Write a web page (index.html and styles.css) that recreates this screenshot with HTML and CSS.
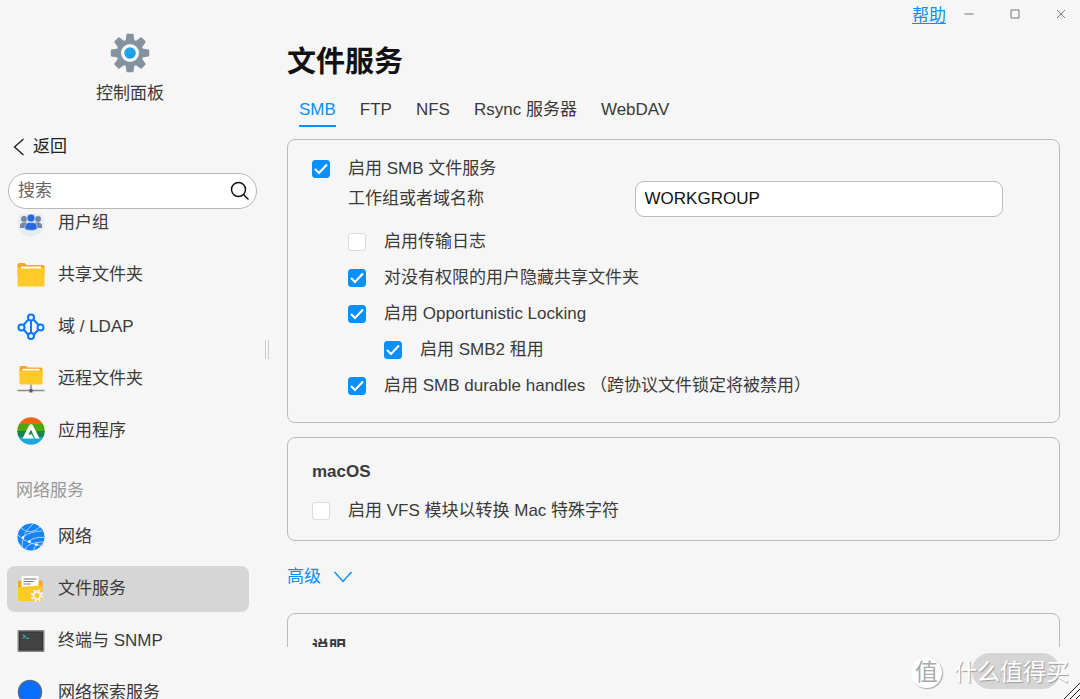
FILE: index.html
```html
<!DOCTYPE html>
<html lang="zh-CN">
<head>
<meta charset="utf-8">
<title>控制面板</title>
<link rel="stylesheet" href="styles.css">
</head>
<body>
<div class="window">
  <aside class="sidebar">
    <div class="app">
      <svg class="app-icon" viewBox="0 0 40 40" aria-hidden="true">
        <defs><linearGradient id="dot" x1="0" y1="0" x2="1" y2="1"><stop offset="0" stop-color="#2bb0ee"/><stop offset="1" stop-color="#1590e0"/></linearGradient></defs>
        <g fill="#84929f">
          <circle cx="20" cy="20" r="13.500"/>
          <g id="teeth"><path id="tooth" d="M15.500 8 16.500 1.600Q16.600.8 17.400.8h5.200q.8 0 .9.800L24.500 8z"/><use href="#tooth" transform="rotate(90 20 20)"/><use href="#tooth" transform="rotate(180 20 20)"/><use href="#tooth" transform="rotate(270 20 20)"/></g>
          <use href="#teeth" transform="rotate(45 20 20)"/>
        </g>
        <circle cx="20" cy="20" r="9" fill="#fafafa"/><circle cx="20" cy="20" r="5.800" fill="url(#dot)"/>
      </svg>
      <span>控制面板</span>
    </div>
    <button class="back" type="button">
      <svg width="12" height="18" viewBox="0 0 12 18" fill="none" stroke="#222" stroke-width="1.400" aria-hidden="true"><path d="M10.500 1 1.500 9l9 8"/></svg>返回
    </button>
    <label class="search">
      <input type="text" placeholder="搜索" aria-label="搜索">
      <svg width="20" height="20" viewBox="0 0 20 20" fill="none" stroke="#111" stroke-width="1.500" aria-hidden="true"><circle cx="8.500" cy="8.500" r="7"/><path d="m13.500 13.500 5 5"/></svg>
    </label>
    <nav class="nav">
      <ul class="nav-list">
        <li><a class="item" href="#group">
          <svg class="icon" viewBox="0 0 28 28"><circle cx="14" cy="14" r="13.500" fill="#e5ecf3"/><g fill="#73879f"><circle cx="7" cy="10" r="3"/><circle cx="21" cy="10" r="3"/><path d="M3 19v-2q0-3.500 4-3.500h3V19zM25 19v-2q0-3.500-4-3.500h-3V19z"/></g><path d="M8 20.500v-3q0-4 4-4h4q4 0 4 4v3q-6 2-12 0z" fill="#2868df" stroke="#e5ecf3" stroke-width=".6"/><circle cx="14" cy="9" r="4" fill="#2868df" stroke="#e5ecf3" stroke-width=".6"/></svg>
          用户组</a></li>
        <li><a class="item" href="#share">
          <svg class="icon" viewBox="0 0 28 28"><path d="M.5 4q0-2 2-2h5l2 2H26q1.500 0 1.500 1.500v8H.5z" fill="#f9a526"/><path d="M.5 7h27v17q0 1.500-1.500 1.500H2Q.5 25.500.5 24z" fill="#ffca28"/><path d="M4 5.500h20v2H4z" fill="#fff"/></svg>
          共享文件夹</a></li>
        <li><a class="item" href="#ldap">
          <svg class="icon" viewBox="0 0 28 28" fill="none" stroke="#0878ff" stroke-width="2"><path d="M14 7v14M11.500 6.500 6.500 12M16.500 6.500l5 5.500M7 17l4.500 5M21 17l-4.500 5"/><circle cx="14" cy="4.500" r="3"/><circle cx="4.500" cy="14.500" r="3"/><circle cx="23.500" cy="14.500" r="3"/><circle cx="14" cy="23" r="3"/></svg>
          域 / LDAP</a></li>
        <li><a class="item" href="#remote">
          <svg class="icon" viewBox="0 0 28 28"><path d="M2.500 2.500q0-1.500 1.500-1.500h5l2 1.500h13q1.500 0 1.500 1.500v8h-23z" fill="#f9a526"/><path d="M2.500 5.500h23V18q0 1.500-1.500 1.500H4q-1.500 0-1.500-1.500z" fill="#ffca28"/><path d="M5.500 3.800h17v1.700h-17z" fill="#fff"/><path d="M14 19.500V25M.5 25.500h27" stroke="#8a8d90" stroke-width="1.500"/><path d="M12.500 24h3v3.500h-3z" fill="#55595d"/></svg>
          远程文件夹</a></li>
        <li><a class="item" href="#apps">
          <svg class="icon" viewBox="0 0 28 28"><clipPath id="disc"><circle cx="14" cy="14" r="13.700"/></clipPath><g clip-path="url(#disc)"><path d="M0 0h28v8H0z" fill="#ef6612"/><path d="M0 7h28v8H0z" fill="#4fa80b"/><path d="M0 14h28v7H0z" fill="#128749"/><path d="M0 20h28v8H0z" fill="#1ba9dc"/></g><path d="M5.500 21.500 12 8.500q2-2.500 4 0l6.500 13H18l-4-9-2.500 5H15l1.800 4z" fill="#fff"/></svg>
          应用程序</a></li>
        <li class="group-title">网络服务</li>
        <li><a class="item" href="#network">
          <svg class="icon" viewBox="0 0 28 28"><circle cx="14" cy="14" r="13.500" fill="#1684fc"/><g fill="none" stroke="#b9d8fb" stroke-width=".9"><path d="M4 5q9 8 19-1M6 14q8-6 19-6M1 12q8 9 26 11M5 24Q5 10 16 1M12 18.500q5-5 15-4M8 26q3-7 19-7M19.500 21q-2 3-3 6"/></g><g fill="#fff"><circle cx="6" cy="14.500" r="1.300"/><circle cx="12.500" cy="18.500" r="1.500"/><circle cx="19.500" cy="21.500" r="1.300"/></g></svg>
          网络</a></li>
        <li><a class="item selected" href="#file" aria-current="page">
          <svg class="icon" viewBox="0 0 28 28"><path d="M1 7q0-1.500 1.500-1.500h22Q25.500 5.500 25.500 7v10H1z" fill="#f9a526"/><path d="M4.500 1h17v13h-17z" fill="#fff"/><path d="M6.500 4h13M6.500 6.500h10M6.500 9h7" stroke="#777" stroke-width="1.100"/><path d="M1 12 23.500 10.500q1.500 0 1.500 1.500v14H2.500Q1 26 1 24.500z" fill="#ffca28"/><g fill="none" stroke="#f1f1f1"><circle cx="20" cy="20.500" r="3.500" stroke-width="2"/><circle cx="20" cy="20.500" r="5.200" stroke-width="2.200" stroke-dasharray="2.040 2.040"/></g></svg>
          文件服务</a></li>
        <li><a class="item" href="#terminal">
          <svg class="icon" viewBox="0 0 28 28"><rect x=".5" y="3" width="27" height="22" rx="1" fill="#858585"/><rect x="2.500" y="5" width="23" height="18" fill="#424242" stroke="#303030"/><path d="m6 8 2.200 1.500L6 11M9 11.200h3" fill="none" stroke="#35c8c4" stroke-width="1.100"/></svg>
          终端与 SNMP</a></li>
        <li><a class="item" href="#discovery">
          <svg class="icon" viewBox="0 0 28 28"><circle cx="13" cy="13" r="11.500" fill="#0b6dff" stroke="#4d6c8c" stroke-width="1.500"/></svg>
          网络探索服务</a></li>
      </ul>
    </nav>
  </aside>
  <div class="splitter" role="separator" aria-orientation="vertical"></div>
  <main class="main">
    <header class="titlebar">
      <a class="help" href="#help">帮助</a>
      <button type="button" aria-label="最小化"><svg viewBox="0 0 10 10"><path d="M.5 5h9"/></svg></button>
      <button type="button" aria-label="最大化"><svg viewBox="0 0 10 10"><path d="M1 1h8v8H1z"/></svg></button>
      <button type="button" aria-label="关闭"><svg viewBox="0 0 10 10"><path d="m1 1 8 8M9 1 1 9"/></svg></button>
    </header>
    <h1>文件服务</h1>
    <nav class="tabs">
      <a class="active" href="#smb">SMB</a><a href="#ftp">FTP</a><a href="#nfs">NFS</a><a href="#rsync">Rsync 服务器</a><a href="#webdav">WebDAV</a>
    </nav>
    <div class="content">
      <section class="card smb">
        <label class="check first"><input type="checkbox" checked>启用 SMB 文件服务</label>
        <div class="field"><label for="workgroup">工作组或者域名称</label><input id="workgroup" type="text" value="WORKGROUP"></div>
        <div class="options">
          <label class="check"><input type="checkbox">启用传输日志</label>
          <label class="check"><input type="checkbox" checked>对没有权限的用户隐藏共享文件夹</label>
          <label class="check"><input type="checkbox" checked>启用 Opportunistic Locking</label>
          <label class="check nested"><input type="checkbox" checked>启用 SMB2 租用</label>
          <label class="check"><input type="checkbox" checked>启用 SMB durable handles （跨协议文件锁定将被禁用）</label>
        </div>
      </section>
      <section class="card">
        <h2>macOS</h2>
        <label class="check"><input type="checkbox">启用 VFS 模块以转换 Mac 特殊字符</label>
      </section>
      <button class="advanced" type="button">高级
        <svg width="18" height="12" viewBox="0 0 18 12" fill="none" stroke="#0a8ffb" stroke-width="1.500" aria-hidden="true"><path d="m.5 1 8.500 9.500L17.500 1"/></svg>
      </button>
      <section class="card">
        <h2>说明</h2>
      </section>
    </div>
    <footer class="footer"><button class="apply" type="button" disabled>应用</button></footer>
  </main>
  <div class="watermark"><span class="badge">值</span><span>什么值得买</span></div>
  <svg class="grip" viewBox="0 0 16 16" aria-hidden="true"><path d="M0 16 16 0M6 16 16 6M12 16l4-4"/></svg>
</div>
</body>
</html>
```

FILE: styles.css
```css
* { box-sizing: border-box; }
body {
  margin: 0;
  background: #f6f6f6;
  color: #3a3a3a;
  font: 17px/24px "Liberation Sans", "Noto Sans CJK SC", sans-serif;
}
button, input { font: inherit; color: inherit; }
button { padding: 0; border: 0; background: none; }
a { color: inherit; text-decoration: none; }
.window { position: relative; display: flex; height: 100vh; overflow: hidden; }

.sidebar { display: flex; flex-direction: column; flex: none; width: 257px; }
.app { display: flex; flex-direction: column; align-items: center; gap: 9px; padding: 33px 0 0 3px; }
.app-icon { width: 40px; height: 40px; }
.back { display: flex; align-items: center; gap: 8px; margin: 29px 0 0 13px; color: #222; }
.search {
  display: flex;
  align-items: center;
  flex: none;
  height: 36px;
  margin: 14px 0 0 8px;
  padding: 0 6px 0 9px;
  border: 1px solid #b8b8b8;
  border-radius: 18px;
  background: #fff;
}
.search input { flex: 1; min-width: 0; padding: 0; border: 0; outline: 0; background: none; }
.search input::placeholder { color: #666; opacity: 1; }
.nav { flex: 1; min-height: 0; margin-top: 5px; overflow: hidden; }
.nav-list { display: flex; flex-direction: column; gap: 6px; margin: -14px 8px 0 7px; padding: 0; list-style: none; }
.item { display: flex; align-items: center; gap: 13px; height: 46px; padding: 0 10px; border-radius: 8px; }
.item.selected { background: #d6d6d6; }
.icon { flex: none; width: 28px; height: 28px; }
.group-title { padding: 19px 9px 5px; color: #999; }

.splitter { align-self: center; flex: none; width: 4px; height: 19px; margin: 0 18px 0 8px; border: solid #ccc; border-width: 0 1px; }

.main { display: flex; flex-direction: column; flex: 1; min-width: 0; padding-right: 20px; }
.titlebar { display: flex; justify-content: flex-end; height: 28px; margin-right: -24px; }
.titlebar button { width: 46px; height: 28px; }
.titlebar svg { width: 10px; height: 10px; fill: none; stroke: #777; }
.help { padding-top: 4px; color: #0a8ffb; text-decoration: underline; text-underline-offset: 2px; }
h1 { margin: 14px 0 0; color: #111; font-size: 29px; line-height: 40px; font-weight: 700; }
.tabs { display: flex; gap: 24px; padding: 16px 12px 12px; }
.tabs a { padding-bottom: 3px; border-bottom: 2px solid transparent; }
.tabs .active { border-color: #0a8ffb; color: #0a8ffb; }
.content { flex: 1; min-height: 0; overflow: hidden; }
.card { margin-bottom: 14px; padding: 22px 24px 11px; border: 1px solid #bbb; border-radius: 8px; }
.card.smb { padding: 17px 24px 18px; }
.check { display: flex; align-items: center; gap: 18px; min-height: 36px; }
.check.first { min-height: 24px; }
.check input {
  appearance: none;
  flex: none;
  width: 18px;
  height: 18px;
  margin: 0;
  border: 1px solid #ddd;
  border-radius: 3px;
  background: #fff;
}
.check input:checked {
  border-color: #0a8ffb;
  background: #0a8ffb url("data:image/svg+xml,%3Csvg xmlns='http://www.w3.org/2000/svg' viewBox='0 0 16 16' fill='none' stroke='white' stroke-width='2'%3E%3Cpath d='m2 8 4 4 8-8.500'/%3E%3C/svg%3E");
}
.field { display: grid; grid-template-columns: 7fr 9fr; align-items: center; padding: 0 32px 0 36px; }
.field input { width: 100%; height: 36px; padding: 0 9px; border: 1px solid #bbb; border-radius: 9px; background: #fff; color: #111; }
.options { padding: 7px 0 0 36px; }
.check.nested { padding-left: 36px; }
h2 { margin: 0 0 9px; font-size: 17px; line-height: 24px; font-weight: 700; }
.advanced { display: flex; align-items: center; gap: 13px; margin: 24px 0; color: #0a8ffb; }
.footer { display: flex; justify-content: flex-end; flex: none; height: 52px; padding-top: 6px; }
.apply { width: 88px; height: 36px; border-radius: 18px; background: #d5d5d5; color: #c8c8c8; }

.watermark {
  position: absolute;
  right: 11px;
  bottom: 10px;
  display: flex;
  align-items: center;
  gap: 12px;
  color: #fff;
  font-size: 23px;
  line-height: 34px;
  text-shadow: 1px 1px 1px #999;
}
.badge { width: 31px; height: 31px; border-radius: 50%; background: #fff; box-shadow: 1px 1px 1px #aaa; color: #aaa; line-height: 30px; text-align: center; text-shadow: none; }
.grip { position: absolute; right: 0; bottom: 0; width: 16px; height: 16px; fill: none; stroke: #222; }
```
